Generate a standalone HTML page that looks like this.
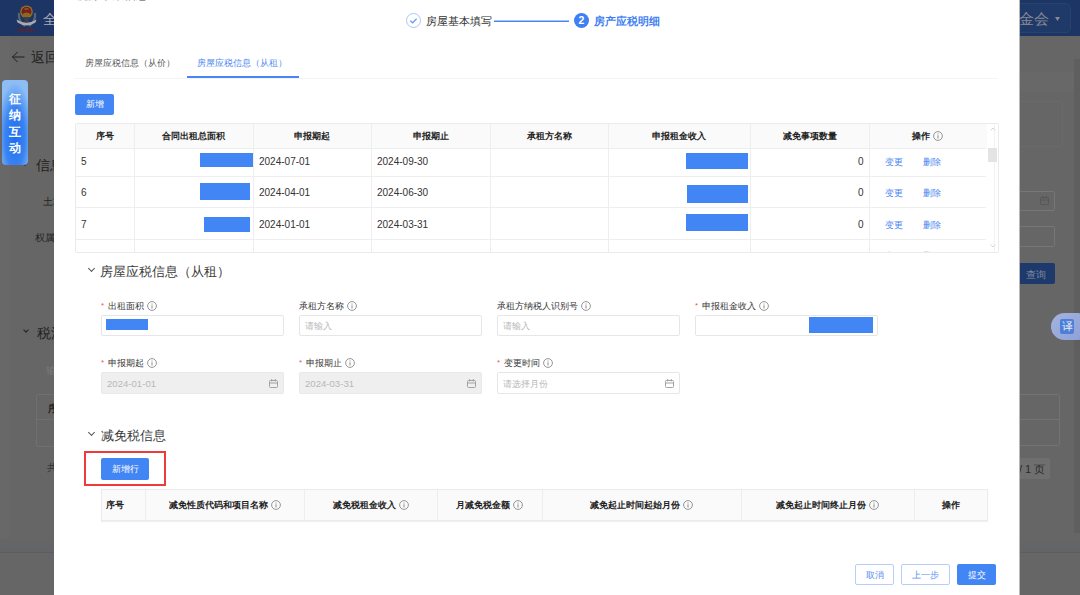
<!DOCTYPE html>
<html><head><meta charset="utf-8">
<style>
*{box-sizing:border-box;margin:0;padding:0}
html,body{width:1080px;height:595px;overflow:hidden}
body{position:relative;background:#666;font-family:"Liberation Sans",sans-serif;color:#333}
.a{position:absolute}
/* backdrop */
#hdr{left:0;top:0;width:1080px;height:36px;background:#1c3564}

.blue{background:#4285f4}
.btn{position:absolute;background:#4285f4;color:#fff;font-size:9.3px;text-align:center;border-radius:2px}
.obtn{position:absolute;background:#fff;color:#5a90f2;border:1px solid #b5cffa;font-size:10px;text-align:center;border-radius:2px}
.tbl{position:absolute;border:1px solid #ebebeb}
.th{position:absolute;font-size:9.3px;font-weight:bold;color:#222;text-align:center}
.td{position:absolute;font-size:10px;color:#333}
.vl{position:absolute;width:1px;background:#eeeeee}
.hl{position:absolute;height:1px;background:#eeeeee}
.lbl{position:absolute;font-size:9.2px;color:#333;white-space:nowrap}
.lbl b{color:#f0525a;font-weight:normal;margin-right:4px;font-size:8px;position:relative;top:-1px}
.inp{position:absolute;height:21px;width:183px;border:1px solid #e6e6e6;border-radius:2px;background:#fff;font-size:9px;color:#b8b8b8;padding:4px 5px;line-height:12px}
.dt{font-size:9.6px}
.dis{background:#efefef;border-color:#e8e8e8}
.ic{display:inline-block;vertical-align:middle;margin-left:3px;position:relative;top:-1px}
.sec{position:absolute;font-size:13px;color:#3a3a3a;white-space:nowrap}
.chev{position:absolute;width:5px;height:5px;border-right:1.3px solid #555;border-bottom:1.3px solid #555;transform:rotate(45deg)}
.lnk{position:absolute;font-size:9px;color:#4a86f0}
</style></head>
<body>

<div class="a" style="left:0;top:36px;width:10px;height:516px;background:#686868"></div>
<div id="hdr" class="a"></div>
<!-- left backdrop -->
<svg class="a" style="left:14px;top:3px" width="26" height="32" viewBox="0 0 26 32">
<path d="M5 10 Q4 18 11 23 M21 10 Q22 18 15 23" stroke="#5d6470" stroke-width="2.2" fill="none"/>
<circle cx="12.5" cy="8.8" r="6.3" fill="#8f7a22"/>
<circle cx="12.5" cy="8.8" r="5" fill="#7b1b22"/>
<path d="M8.5 11 Q12.5 8 16.5 11 L16 13.5 Q12.5 15 9 13.5Z" fill="#8a6b1e"/>
<rect x="10.5" y="5" width="4" height="2" fill="#806423" opacity=".8"/>
<path d="M10 14 L15 14 L14.5 19 L10.5 19Z" fill="#3a3f4a"/>
<path d="M2.5 16.5 Q12.5 23 22.5 16.5 L21.5 19.5 Q12.5 25.5 3.5 19.5Z" fill="#a9abb0"/>
<path d="M4 25.5 L4.5 29.5 M6 26 Q8 25 7 29 M9 26 L9.5 29 M11 27 Q12 25 12.5 29 M14 26 L14.5 29 M16 26 Q18 25 17.5 29 M19 27 L20 29" stroke="#6e1e25" stroke-width="1.2" fill="none"/>
</svg>
<div class="a" style="left:43px;top:11px;font-size:14px;color:#a7abb5">全</div>
<svg class="a" style="left:11px;top:51px" width="15" height="12" viewBox="0 0 15 12"><path d="M13.5 6 H1.5 M6.5 1 L1.5 6 L6.5 11" stroke="#1e1e1e" stroke-width="1" fill="none"/></svg>
<div class="a" style="left:31px;top:49px;font-size:13.5px;color:#222">返回</div>

<div class="chev" style="left:23px;top:161px;width:4px;height:4px;border-color:#222"></div><div class="a" style="left:36px;top:157px;font-size:14px;color:#222">信息</div>
<div class="a" style="left:2px;top:80px;width:26px;height:85px;border-radius:4px;background:radial-gradient(ellipse 70% 65% at 50% 68%,#1e6cf0 0%,#3a84f2 55%,#8dbdf5 100%)"></div>
<div class="a" style="left:9px;top:91px;width:13px;font-size:12px;line-height:16.4px;color:#fff;font-weight:bold">征纳互动</div>
<div class="a" style="left:43px;top:195px;font-size:10px;color:#222">土地</div>
<div class="a" style="left:35px;top:231px;font-size:10px;color:#222">权属</div>
<div class="chev" style="left:24px;top:328px;width:4px;height:4px;border-color:#222"></div>
<div class="a" style="left:37px;top:325px;font-size:14px;color:#222">税源</div>
<div class="a" style="left:46px;top:364px;font-size:10px;color:#7a7a7a">输</div>
<div class="a" style="left:36px;top:394px;width:30px;height:53px;border:1px solid #707070;border-radius:2px"></div>
<div class="a" style="left:36px;top:419px;width:30px;height:1px;background:#707070"></div>
<div class="a" style="left:48px;top:402px;font-size:10px;font-weight:bold;color:#222">序</div>
<div class="a" style="left:47px;top:461px;font-size:10px;color:#333">共</div>
<div class="a" style="left:0;top:538px;width:1080px;height:14px;background:linear-gradient(#666,#626468)"></div><div class="a" style="left:0;top:552px;width:1080px;height:1px;background:#5d5d5d"></div>
<!-- right backdrop -->
<div class="a" style="left:990px;top:3px;width:81px;height:30px;border-radius:5px;background:#1f3a69;border:1px solid #29426f"></div>
<div class="a" style="left:1019px;top:10px;font-size:15px;color:#878b94">金会</div>
<svg class="a" style="left:1055px;top:17px" width="5" height="4" viewBox="0 0 5 4"><path d="M0 0H5L2.5 4Z" fill="#878b94"/></svg>
<div class="a" style="left:990px;top:72px;width:84px;height:20px;background:#686868"></div><div class="a" style="left:990px;top:101px;width:73px;height:46px;border:1px solid #6a6a6a;border-radius:2px"></div><div class="a" style="left:1074px;top:59px;width:6px;height:474px;background:#5f5f5f"></div>
<div class="a" style="left:990px;top:191px;width:65px;height:20px;border:1px solid #767676;border-radius:2px"></div>
<svg class="a" style="left:1040px;top:196px" width="9" height="9" viewBox="0 0 9 9"><rect x=".5" y="1.5" width="8" height="7" rx="1" fill="none" stroke="#555" stroke-width=".9"/><path d="M.5 4H8.5M2.7 0v2.4M6.3 0v2.4" stroke="#555" stroke-width=".9"/></svg>
<div class="a" style="left:990px;top:226px;width:65px;height:21px;border:1px solid #767676;border-radius:2px"></div>
<div class="a" style="left:990px;top:263px;width:65px;height:21px;border-radius:2px;background:#1e3a6c"></div>
<div class="a" style="left:1026px;top:269px;font-size:9.5px;color:#7f899c">查询</div>
<div class="a" style="left:1051px;top:313px;width:40px;height:27px;border-radius:13.5px;background:linear-gradient(135deg,#a4b3df,#8a9dd6)"></div>
<div class="a" style="left:1060px;top:319px;width:14px;height:15px;border-radius:2px;background:#4b7fd8;color:#e8ecf5;font-size:10.5px;text-align:center;line-height:15px">译</div>
<div class="a" style="left:990px;top:394px;width:70px;height:52px;border:1px solid #737373;border-radius:2px"></div>
<div class="a" style="left:990px;top:419px;width:70px;height:1px;background:#737373"></div>
<div class="a" style="left:1005px;top:458px;width:45px;height:21px;background:#6f6f6f;border-radius:2px"></div>
<div class="a" style="left:1019px;top:462px;font-size:11px;color:#2a2a2a">/ 1 页</div>


<div class="a" style="left:1019px;top:0;width:1px;height:595px;background:#b8b8b8"></div><div class="a" style="left:54px;top:0;width:965px;height:595px;background:#fff"></div>
<div class="a" style="left:76px;top:-12px;font-size:11.5px;color:#444">税源采集信息</div>

<!-- steps -->
<svg class="a" style="left:406px;top:13px" width="15" height="15" viewBox="0 0 15 15"><circle cx="7.5" cy="7.5" r="7" fill="none" stroke="#a9c6fa" stroke-width="1"/><path d="M4.3 7.7L6.6 9.8L10.6 5.7" fill="none" stroke="#6b9df5" stroke-width="1.3"/></svg>
<div class="a" style="left:426px;top:15px;font-size:10.5px;color:#333">房屋基本填写</div>
<svg class="a" style="left:494px;top:19px" width="76" height="4"><line x1="0" y1="2.2" x2="75" y2="2.2" stroke="#4a86f0" stroke-width="1.4"/></svg>
<div class="a" style="left:574px;top:13px;width:15px;height:15px;border-radius:50%;background:#3f7ff3;color:#fff;font-size:10.5px;font-weight:bold;text-align:center;line-height:15px">2</div>
<div class="a" style="left:594px;top:15px;font-size:10.5px;color:#3f7ff3;font-weight:bold">房产应税明细</div>

<!-- tabs -->
<div class="a" style="left:85px;top:57px;font-size:9.3px;color:#555">房屋应税信息（从价）</div>
<div class="a" style="left:197px;top:57px;font-size:9.3px;color:#4a86f0">房屋应税信息（从租）</div>
<div class="a" style="left:74px;top:78px;width:924px;height:1px;background:#f4f4f4"></div>
<div class="a" style="left:187px;top:76px;width:112px;height:2px;background:#4a86f0"></div>

<div class="btn" style="left:75px;top:94px;width:39px;height:21px;line-height:21px">新增</div>
<div class="tbl" style="left:75px;top:123px;width:924px;height:130px;border-radius:2px"></div><div class="a" style="left:870px;top:240px;width:100px;height:12px;overflow:hidden"><div class="lnk" style="left:15px;top:10px">变更</div><div class="lnk" style="left:53px;top:10px">删除</div></div>
<div class="a" style="left:76px;top:124px;width:911px;height:24px;background:#fafafa"></div><div class="vl" style="left:994px;top:124px;height:128px;background:#f2f2f2"></div>
<div class="vl" style="left:134px;top:124px;height:128px"></div>
<div class="vl" style="left:253px;top:124px;height:128px"></div>
<div class="vl" style="left:371px;top:124px;height:128px"></div>
<div class="vl" style="left:490px;top:124px;height:128px"></div>
<div class="vl" style="left:608px;top:124px;height:128px"></div>
<div class="vl" style="left:750px;top:124px;height:128px"></div>
<div class="vl" style="left:869px;top:124px;height:128px"></div>

<div class="hl" style="left:76px;top:148px;width:910px"></div>
<div class="hl" style="left:76px;top:176px;width:910px"></div>
<div class="hl" style="left:76px;top:207px;width:910px"></div>
<div class="hl" style="left:76px;top:239px;width:910px"></div>
<div class="th" style="left:75px;top:130px;width:59px">序号</div>
<div class="th" style="left:134px;top:130px;width:119px">合同出租总面积</div>
<div class="th" style="left:253px;top:130px;width:118px">申报期起</div>
<div class="th" style="left:371px;top:130px;width:119px">申报期止</div>
<div class="th" style="left:490px;top:130px;width:118px">承租方名称</div>
<div class="th" style="left:608px;top:130px;width:142px">申报租金收入</div>
<div class="th" style="left:750px;top:130px;width:119px">减免事项数量</div>
<div class="th" style="left:869px;top:130px;width:117px">操作<svg class="ic" width="10" height="10" viewBox="0 0 10 10"><circle cx="5" cy="5" r="4.4" fill="none" stroke="#8a8a8a" stroke-width=".9"/><path d="M5 4.3v3.2M5 2.5v1" stroke="#8a8a8a" stroke-width="1"/></svg></div>
<div class="a" style="left:988px;top:148px;width:9px;height:14px;background:#e4e4e4"></div>
<svg class="a" style="left:990px;top:127px" width="6" height="4"><path d="M.5 3.5L3 1L5.5 3.5" fill="none" stroke="#d6d6d6" stroke-width="1"/></svg>
<svg class="a" style="left:990px;top:244px" width="6" height="4"><path d="M.5 .5L3 3L5.5 .5" fill="none" stroke="#d6d6d6" stroke-width="1"/></svg>
<div class="td" style="left:81px;top:156px">5</div>
<div class="td" style="left:259px;top:156px">2024-07-01</div>
<div class="td" style="left:377px;top:156px">2024-09-30</div>
<div class="a blue" style="left:200px;top:153px;width:53px;height:14px"></div>
<div class="a blue" style="left:686px;top:153px;width:62px;height:16px"></div>
<div class="td" style="left:858px;top:156px">0</div>
<div class="lnk" style="left:885px;top:156px">变更</div>
<div class="lnk" style="left:923px;top:156px">删除</div>
<div class="td" style="left:81px;top:187px">6</div>
<div class="td" style="left:259px;top:187px">2024-04-01</div>
<div class="td" style="left:377px;top:187px">2024-06-30</div>
<div class="a blue" style="left:200px;top:183px;width:50px;height:17px"></div>
<div class="a blue" style="left:687px;top:185px;width:61px;height:18px"></div>
<div class="td" style="left:858px;top:187px">0</div>
<div class="lnk" style="left:885px;top:187px">变更</div>
<div class="lnk" style="left:923px;top:187px">删除</div>
<div class="td" style="left:81px;top:219px">7</div>
<div class="td" style="left:259px;top:219px">2024-01-01</div>
<div class="td" style="left:377px;top:219px">2024-03-31</div>
<div class="a blue" style="left:204px;top:217px;width:46px;height:15px"></div>
<div class="a blue" style="left:686px;top:214px;width:62px;height:17px"></div>
<div class="td" style="left:858px;top:219px">0</div>
<div class="lnk" style="left:885px;top:219px">变更</div>
<div class="lnk" style="left:923px;top:219px">删除</div>
<div class="chev" style="left:89px;top:266px"></div>
<div class="sec" style="left:100px;top:263px">房屋应税信息（从租）</div>
<div class="lbl" style="left:101px;top:300px"><b>*</b>出租面积<svg class="ic" width="10" height="10" viewBox="0 0 10 10"><circle cx="5" cy="5" r="4.4" fill="none" stroke="#8a8a8a" stroke-width=".9"/><path d="M5 4.3v3.2M5 2.5v1" stroke="#8a8a8a" stroke-width="1"/></svg></div>
<div class="lbl" style="left:299px;top:300px">承租方名称<svg class="ic" width="10" height="10" viewBox="0 0 10 10"><circle cx="5" cy="5" r="4.4" fill="none" stroke="#8a8a8a" stroke-width=".9"/><path d="M5 4.3v3.2M5 2.5v1" stroke="#8a8a8a" stroke-width="1"/></svg></div>
<div class="lbl" style="left:497px;top:300px">承租方纳税人识别号<svg class="ic" width="10" height="10" viewBox="0 0 10 10"><circle cx="5" cy="5" r="4.4" fill="none" stroke="#8a8a8a" stroke-width=".9"/><path d="M5 4.3v3.2M5 2.5v1" stroke="#8a8a8a" stroke-width="1"/></svg></div>
<div class="lbl" style="left:695px;top:300px"><b>*</b>申报租金收入<svg class="ic" width="10" height="10" viewBox="0 0 10 10"><circle cx="5" cy="5" r="4.4" fill="none" stroke="#8a8a8a" stroke-width=".9"/><path d="M5 4.3v3.2M5 2.5v1" stroke="#8a8a8a" stroke-width="1"/></svg></div>
<div class="inp" style="left:101px;top:315px"></div>
<div class="a blue" style="left:106px;top:319px;width:42px;height:11px"></div>
<div class="inp" style="left:299px;top:315px">请输入</div>
<div class="inp" style="left:497px;top:315px">请输入</div>
<div class="inp" style="left:695px;top:315px"></div>
<div class="a blue" style="left:809px;top:317px;width:64px;height:16px"></div>
<div class="lbl" style="left:101px;top:357px"><b>*</b>申报期起<svg class="ic" width="10" height="10" viewBox="0 0 10 10"><circle cx="5" cy="5" r="4.4" fill="none" stroke="#8a8a8a" stroke-width=".9"/><path d="M5 4.3v3.2M5 2.5v1" stroke="#8a8a8a" stroke-width="1"/></svg></div>
<div class="lbl" style="left:299px;top:357px"><b>*</b>申报期止<svg class="ic" width="10" height="10" viewBox="0 0 10 10"><circle cx="5" cy="5" r="4.4" fill="none" stroke="#8a8a8a" stroke-width=".9"/><path d="M5 4.3v3.2M5 2.5v1" stroke="#8a8a8a" stroke-width="1"/></svg></div>
<div class="lbl" style="left:497px;top:357px"><b>*</b>变更时间<svg class="ic" width="10" height="10" viewBox="0 0 10 10"><circle cx="5" cy="5" r="4.4" fill="none" stroke="#8a8a8a" stroke-width=".9"/><path d="M5 4.3v3.2M5 2.5v1" stroke="#8a8a8a" stroke-width="1"/></svg></div>
<div class="inp dis dt" style="left:101px;top:372px;height:22px;padding-top:5px">2024-01-01</div><svg class="a" style="left:269px;top:379px" width="9" height="9" viewBox="0 0 9 9"><rect x=".5" y="1.5" width="8" height="7" rx="1" fill="none" stroke="#9a9a9a" stroke-width=".9"/><path d="M.5 4H8.5M2.7 0v2.4M6.3 0v2.4" stroke="#9a9a9a" stroke-width=".9"/></svg>
<div class="inp dis dt" style="left:299px;top:372px;height:22px;padding-top:5px">2024-03-31</div><svg class="a" style="left:467px;top:379px" width="9" height="9" viewBox="0 0 9 9"><rect x=".5" y="1.5" width="8" height="7" rx="1" fill="none" stroke="#9a9a9a" stroke-width=".9"/><path d="M.5 4H8.5M2.7 0v2.4M6.3 0v2.4" stroke="#9a9a9a" stroke-width=".9"/></svg>
<div class="inp" style="left:497px;top:372px;height:22px;padding-top:5px">请选择月份</div><svg class="a" style="left:665px;top:379px" width="9" height="9" viewBox="0 0 9 9"><rect x=".5" y="1.5" width="8" height="7" rx="1" fill="none" stroke="#9a9a9a" stroke-width=".9"/><path d="M.5 4H8.5M2.7 0v2.4M6.3 0v2.4" stroke="#9a9a9a" stroke-width=".9"/></svg>
<div class="chev" style="left:89px;top:430px"></div>
<div class="sec" style="left:101px;top:427px">减免税信息</div>
<div class="a" style="left:84px;top:451px;width:82px;height:35px;border:2px solid #ee3c3c"></div>
<div class="btn" style="left:101px;top:458px;width:48px;height:22px;line-height:22px">新增行</div>
<div class="a" style="left:101px;top:489px;width:887px;height:32px;background:#fafafa;border:1px solid #ebebeb;box-shadow:0 1px 1px rgba(0,0,0,.06)"></div>
<div class="vl" style="left:145px;top:490px;height:30px"></div>
<div class="vl" style="left:304px;top:490px;height:30px"></div>
<div class="vl" style="left:437px;top:490px;height:30px"></div>
<div class="vl" style="left:542px;top:490px;height:30px"></div>
<div class="vl" style="left:741px;top:490px;height:30px"></div>
<div class="vl" style="left:914px;top:490px;height:30px"></div>
<div class="th" style="left:106px;top:499px;text-align:left">序号</div>
<div class="th" style="left:145px;top:499px;width:159px">减免性质代码和项目名称<svg class="ic" width="10" height="10" viewBox="0 0 10 10"><circle cx="5" cy="5" r="4.4" fill="none" stroke="#8a8a8a" stroke-width=".9"/><path d="M5 4.3v3.2M5 2.5v1" stroke="#8a8a8a" stroke-width="1"/></svg></div>
<div class="th" style="left:304px;top:499px;width:133px">减免税租金收入<svg class="ic" width="10" height="10" viewBox="0 0 10 10"><circle cx="5" cy="5" r="4.4" fill="none" stroke="#8a8a8a" stroke-width=".9"/><path d="M5 4.3v3.2M5 2.5v1" stroke="#8a8a8a" stroke-width="1"/></svg></div>
<div class="th" style="left:437px;top:499px;width:105px">月减免税金额<svg class="ic" width="10" height="10" viewBox="0 0 10 10"><circle cx="5" cy="5" r="4.4" fill="none" stroke="#8a8a8a" stroke-width=".9"/><path d="M5 4.3v3.2M5 2.5v1" stroke="#8a8a8a" stroke-width="1"/></svg></div>
<div class="th" style="left:542px;top:499px;width:199px">减免起止时间起始月份<svg class="ic" width="10" height="10" viewBox="0 0 10 10"><circle cx="5" cy="5" r="4.4" fill="none" stroke="#8a8a8a" stroke-width=".9"/><path d="M5 4.3v3.2M5 2.5v1" stroke="#8a8a8a" stroke-width="1"/></svg></div>
<div class="th" style="left:741px;top:499px;width:173px">减免起止时间终止月份<svg class="ic" width="10" height="10" viewBox="0 0 10 10"><circle cx="5" cy="5" r="4.4" fill="none" stroke="#8a8a8a" stroke-width=".9"/><path d="M5 4.3v3.2M5 2.5v1" stroke="#8a8a8a" stroke-width="1"/></svg></div>
<div class="th" style="left:914px;top:499px;width:74px">操作</div>
<div class="obtn" style="left:855px;top:564px;width:39px;height:21px;line-height:21px;font-size:9px">取消</div>
<div class="obtn" style="left:901px;top:564px;width:49px;height:21px;line-height:21px;font-size:9px">上一步</div>
<div class="btn" style="left:957px;top:564px;width:39px;height:21px;line-height:22px;font-size:9px">提交</div>
</body></html>
